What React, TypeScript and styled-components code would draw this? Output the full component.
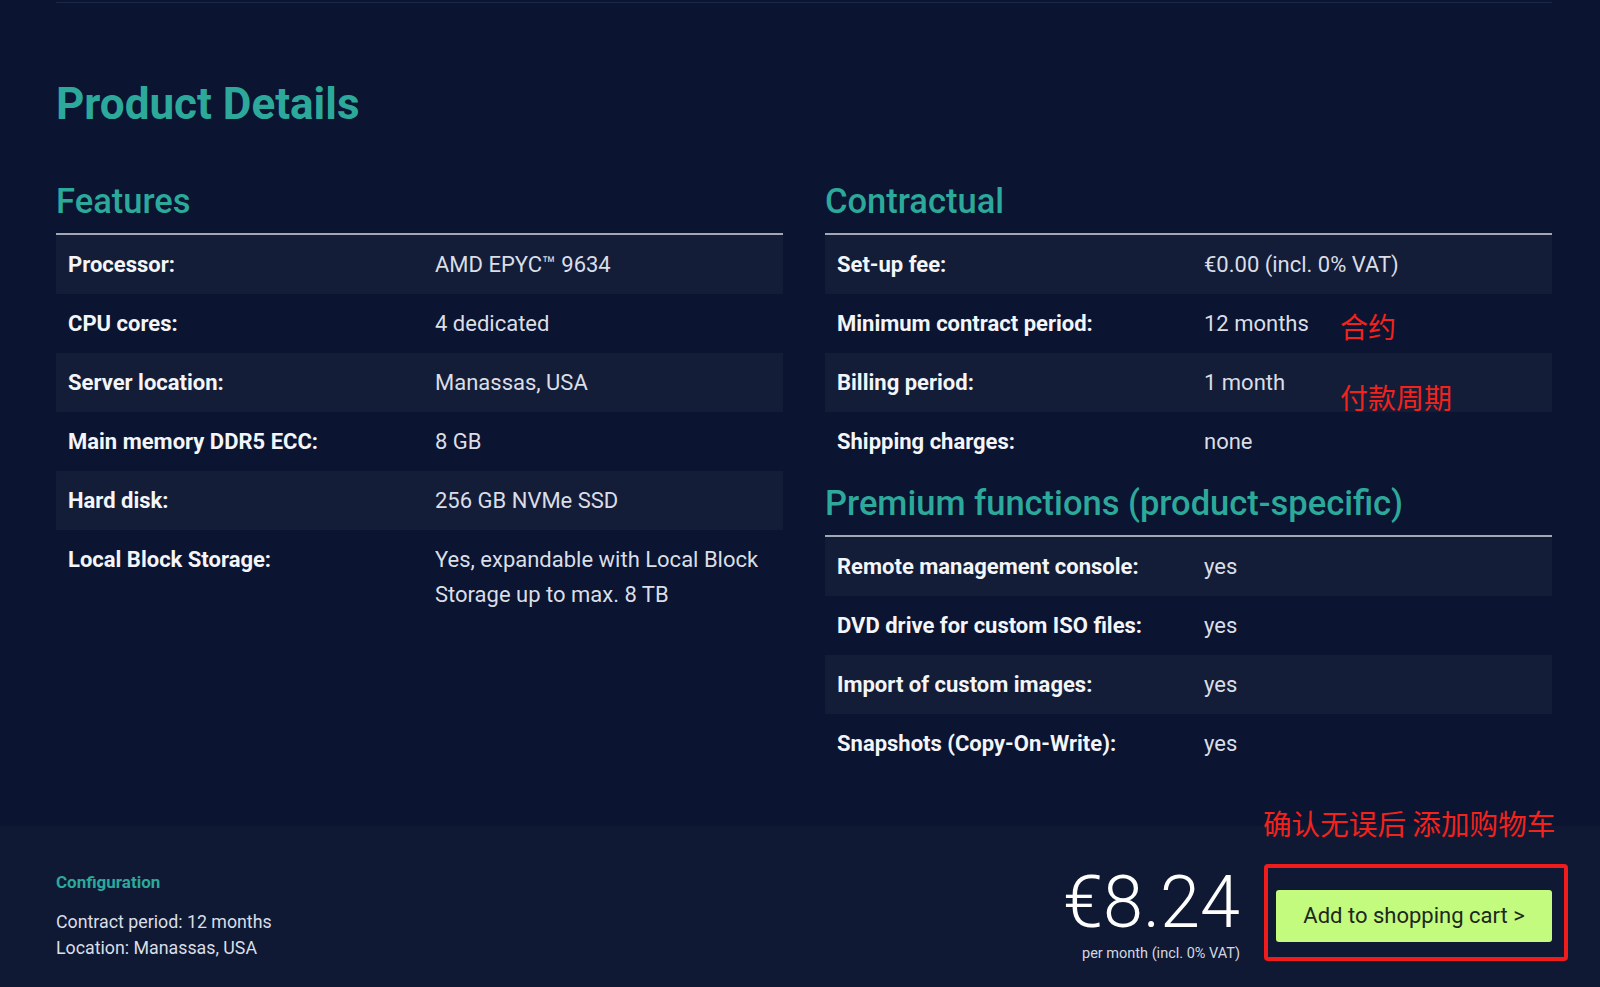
import React from 'react';
import styled, { createGlobalStyle } from 'styled-components';

const GlobalStyle = createGlobalStyle`
  html, body {
    margin: 0;
    padding: 0;
    background: #0b1430;
  }
  body {
    font-family: Roboto, "Noto Sans", "Liberation Sans", sans-serif;
    color: #f2f4f8;
  }
  * { box-sizing: border-box; }
`;

const Page = styled.div`
  min-height: 100vh;
  display: flex;
  flex-direction: column;
  padding-top: 2px;
`;

const Main = styled.section`
  padding: 0 48px 53px 56px;
`;

const TopLine = styled.div`
  height: 1px;
  background: #1c2848;
`;

const Title = styled.h1`
  margin: 76px 0 0;
  font-size: 44px;
  line-height: 50px;
  font-weight: 700;
  color: #2ca99b;
`;

const Columns = styled.div`
  display: grid;
  grid-template-columns: 727px 727px;
  column-gap: 42px;
  margin-top: 52px;
`;

const Column = styled.div`
  display: flex;
  flex-direction: column;
`;

const Heading = styled.h2<{ $spaced?: boolean }>`
  margin: ${p => (p.$spaced ? '12px' : '0')} 0 12px;
  font-size: 34.5px;
  line-height: 40px;
  font-weight: 500;
  color: #2ca99b;
`;

const Table = styled.div`
  border-top: 2px solid #a3a8b4;
`;

const Row = styled.div`
  position: relative;
  display: grid;
  grid-template-columns: 367px 1fr;
  padding: 12px 12px;
  font-size: 22px;
  line-height: 35px;

  &:nth-child(odd) {
    background: #141d37;
  }
`;

const Label = styled.span`
  font-weight: 700;
  color: #f3f5f9;
`;

const Value = styled.span`
  font-weight: 400;
  color: #dadee7;
`;

const Note = styled.span<{ $top: number }>`
  position: absolute;
  left: 515px;
  top: ${p => p.$top}px;
  font-family: "Noto Sans CJK SC", sans-serif;
  font-size: 28px;
  line-height: 28px;
  color: #f2221d;
  white-space: nowrap;
`;

const Footer = styled.footer`
  margin-top: auto;
  background: #0f1933;
  display: flex;
  align-items: center;
  justify-content: space-between;
  padding: 42px 48px 27px 56px;
`;

const Config = styled.div`
  display: flex;
  flex-direction: column;
`;

const ConfigTitle = styled.div`
  font-size: 17px;
  line-height: 22px;
  font-weight: 700;
  color: #2ca99b;
  margin-bottom: 16px;
`;

const ConfigLine = styled.div`
  font-size: 17.8px;
  line-height: 26px;
  color: #dadee7;
`;

const Checkout = styled.div`
  display: flex;
  align-items: center;
  gap: 36px;
`;

const PriceBox = styled.div`
  display: flex;
  flex-direction: column;
  align-items: flex-end;
`;

const Price = styled.div`
  font-size: 72px;
  line-height: 70px;
  font-weight: 300;
  color: #ffffff;
`;

const PriceNote = styled.div`
  margin-top: 7px;
  font-size: 14.5px;
  line-height: 18px;
  color: #d3d7e0;
`;

const Marked = styled.div`
  position: relative;

  &::after {
    content: '';
    position: absolute;
    top: -26px;
    left: -12px;
    right: -16px;
    bottom: -19px;
    border: 4px solid #f01c1c;
    border-radius: 4px;
    pointer-events: none;
  }
`;

const MarkNote = styled.span`
  position: absolute;
  left: -13px;
  top: -82px;
  font-family: "Noto Sans CJK SC", sans-serif;
  font-size: 28.6px;
  line-height: 30px;
  color: #f2221d;
  white-space: nowrap;
`;

const CartButton = styled.button`
  width: 276px;
  height: 52px;
  border: none;
  border-radius: 3px;
  background: #c2fb7e;
  color: #1d281c;
  font-family: Roboto, "Liberation Sans", sans-serif;
  font-size: 22px;
  cursor: pointer;
`;

type Spec = [string, string];

const features: Spec[] = [
  ['Processor:', 'AMD EPYC™ 9634'],
  ['CPU cores:', '4 dedicated'],
  ['Server location:', 'Manassas, USA'],
  ['Main memory DDR5 ECC:', '8 GB'],
  ['Hard disk:', '256 GB NVMe SSD'],
  ['Local Block Storage:', 'Yes, expandable with Local Block Storage up to max. 8 TB'],
];

const contractual: Spec[] = [
  ['Set-up fee:', '€0.00 (incl. 0% VAT)'],
  ['Minimum contract period:', '12 months'],
  ['Billing period:', '1 month'],
  ['Shipping charges:', 'none'],
];

const premium: Spec[] = [
  ['Remote management console:', 'yes'],
  ['DVD drive for custom ISO files:', 'yes'],
  ['Import of custom images:', 'yes'],
  ['Snapshots (Copy-On-Write):', 'yes'],
];

// notes scribbled on the screenshot, keyed by row index
const contractNotes: Record<number, { text: string; top: number }> = {
  1: { text: '合约', top: 18 },
  2: { text: '付款周期', top: 30 },
};

const SpecTable = ({ rows, notes }: { rows: Spec[]; notes?: Record<number, { text: string; top: number }> }) => (
  <Table>
    {rows.map(([label, value], i) => (
      <Row key={label}>
        <Label>{label}</Label>
        <Value>{value}</Value>
        {notes && notes[i] && <Note $top={notes[i].top}>{notes[i].text}</Note>}
      </Row>
    ))}
  </Table>
);

const App = () => {
  return (
    <Page>
      <GlobalStyle />
      <Main>
        <TopLine />
        <Title>Product Details</Title>
        <Columns>
          <Column>
            <Heading>Features</Heading>
            <SpecTable rows={features} />
          </Column>
          <Column>
            <Heading>Contractual</Heading>
            <SpecTable rows={contractual} notes={contractNotes} />
            <Heading $spaced>Premium functions (product-specific)</Heading>
            <SpecTable rows={premium} />
          </Column>
        </Columns>
      </Main>
      <Footer>
        <Config>
          <ConfigTitle>Configuration</ConfigTitle>
          <ConfigLine>Contract period: 12 months</ConfigLine>
          <ConfigLine>Location: Manassas, USA</ConfigLine>
        </Config>
        <Checkout>
          <PriceBox>
            <Price>€8.24</Price>
            <PriceNote>per month (incl. 0% VAT)</PriceNote>
          </PriceBox>
          <Marked>
            <MarkNote>确认无误后 添加购物车</MarkNote>
            <CartButton>Add to shopping cart &gt;</CartButton>
          </Marked>
        </Checkout>
      </Footer>
    </Page>
  );
};

export default App;
